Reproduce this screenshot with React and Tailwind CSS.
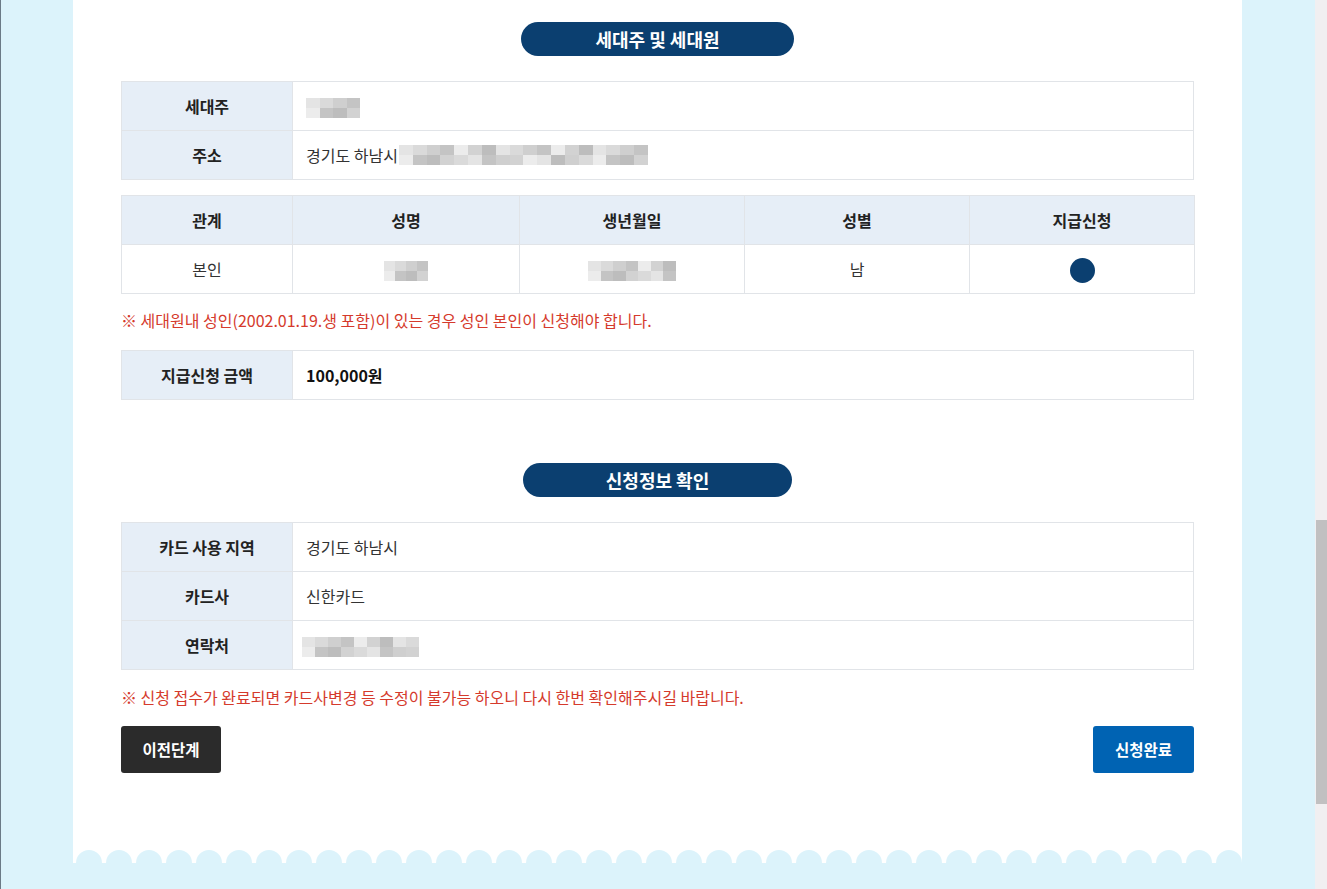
const FONT = { fontFamily: '"Noto Sans CJK KR", "Noto Sans", sans-serif' }

const MOSAIC = ['bg-[#e4e4e4]', 'bg-[#d2d2d2]', 'bg-[#c4c4c4]', 'bg-[#dadada]', 'bg-[#bdbdbd]', 'bg-[#ececec]', 'bg-[#cfcfcf]']

function Blur({ cols, w }) {
  return (
    <div className={`inline-flex flex-col align-middle ${w}`}>
      {[0, 1].map(r => (
        <div key={r} className="flex h-[10px]">
          {Array.from({ length: cols }).map((_, i) => (
            <div key={i} className={`flex-1 ${MOSAIC[(i * 3 + r * 5 + (i % 2) * r) % MOSAIC.length]}`} />
          ))}
        </div>
      ))}
    </div>
  )
}

function Pill({ children, w }) {
  return (
    <div className="flex justify-center">
      <div className={`h-[34px] ${w} rounded-full bg-[#0b3f70] text-white text-[18px] font-bold flex items-center justify-center`}>
        {children}
      </div>
    </div>
  )
}

function InfoTable({ rows }) {
  return (
    <table className="w-full border-collapse text-[16px]">
      <tbody>
        {rows.map(([label, value]) => (
          <tr key={label}>
            <th className="w-[171px] h-[49px] bg-[#e6eef7] border border-[#e1e4e8] font-bold text-[#222]">{label}</th>
            <td className="h-[49px] border border-[#e1e4e8] px-[13px] text-[#333]">{value}</td>
          </tr>
        ))}
      </tbody>
    </table>
  )
}

function Note({ children }) {
  return <p className="text-[16px] text-[#d53a2c] leading-[20px]">{children}</p>
}

export default function App() {
  return (
    <div className="h-[889px] w-[1327px] overflow-hidden flex bg-[#dcf3fb]" style={FONT}>
      <div className="flex-1 border-l border-[#6b7a86] pl-[72px]">
        <div className="w-[1169px] flex flex-col">
          <div className="bg-white px-[48px] pt-[22px] pb-[77px]">
            <Pill w="w-[273px]">세대주 및 세대원</Pill>

            <div className="mt-[25px]">
              <InfoTable
                rows={[
                  ['세대주', <Blur cols={4} w="w-[54px]" />],
                  ['주소', <span className="inline-flex items-center gap-[1px]">경기도 하남시 <Blur cols={18} w="w-[249px]" /></span>],
                ]}
              />
            </div>

            <table className="w-full table-fixed border-collapse text-[16px] mt-[15px]">
              <colgroup>
                <col className="w-[171px]" />
                <col className="w-[227px]" />
                <col className="w-[225px]" />
                <col className="w-[225px]" />
                <col className="w-[225px]" />
              </colgroup>
              <thead>
                <tr className="bg-[#e6eef7]">
                  {['관계', '성명', '생년월일', '성별', '지급신청'].map(h => (
                    <th key={h} className="h-[49px] border border-[#e1e4e8] font-bold text-[#222]">{h}</th>
                  ))}
                </tr>
              </thead>
              <tbody>
                <tr className="text-center text-[#333]">
                  <td className="h-[49px] border border-[#e1e4e8]">본인</td>
                  <td className="border border-[#e1e4e8]"><Blur cols={4} w="w-[44px]" /></td>
                  <td className="border border-[#e1e4e8]"><Blur cols={7} w="w-[88px]" /></td>
                  <td className="border border-[#e1e4e8]">남</td>
                  <td className="border border-[#e1e4e8]">
                    <span className="inline-block w-[25px] h-[25px] rounded-full bg-[#0b3f70] align-middle" />
                  </td>
                </tr>
              </tbody>
            </table>

            <div className="mt-[16px]">
              <Note>※ 세대원내 성인(2002.01.19.생 포함)이 있는 경우 성인 본인이 신청해야 합니다.</Note>
            </div>

            <div className="mt-[20px]">
              <InfoTable rows={[['지급신청 금액', <span className="font-bold text-[#111]">100,000원</span>]]} />
            </div>

            <div className="mt-[63px]">
              <Pill w="w-[269px]">신청정보 확인</Pill>
            </div>

            <div className="mt-[25px]">
              <InfoTable
                rows={[
                  ['카드 사용 지역', '경기도 하남시'],
                  ['카드사', '신한카드'],
                  ['연락처', <span className="-ml-[4px] inline-block"><Blur cols={9} w="w-[117px]" /></span>],
                ]}
              />
            </div>

            <div className="mt-[17px]">
              <Note>※ 신청 접수가 완료되면 카드사변경 등 수정이 불가능 하오니 다시 한번 확인해주시길 바랍니다.</Note>
            </div>

            <div className="mt-[19px] flex justify-between">
              <button className="w-[100px] h-[47px] rounded-[3px] bg-[#2b2b2b] text-white text-[15.5px] font-bold">이전단계</button>
              <button className="w-[101px] h-[47px] rounded-[3px] bg-[#0063b3] text-white text-[15.5px] font-bold">신청완료</button>
            </div>
          </div>

          <div className="bg-white">
            <div className="flex gap-[4px] pl-[3px] overflow-hidden h-[13px] items-end">
              {Array.from({ length: 40 }).map((_, i) => (
                <div key={i} className="shrink-0 w-[26px] h-[13px] rounded-t-full bg-[#dcf3fb]" />
              ))}
            </div>
          </div>
        </div>
      </div>

      <div className="w-[12px] h-full bg-[#f1eff1] flex flex-col">
        <div className="h-[520px]" />
        <div className="h-[284px] ml-[1px] bg-[#c1c0c1]" />
      </div>
    </div>
  )
}
